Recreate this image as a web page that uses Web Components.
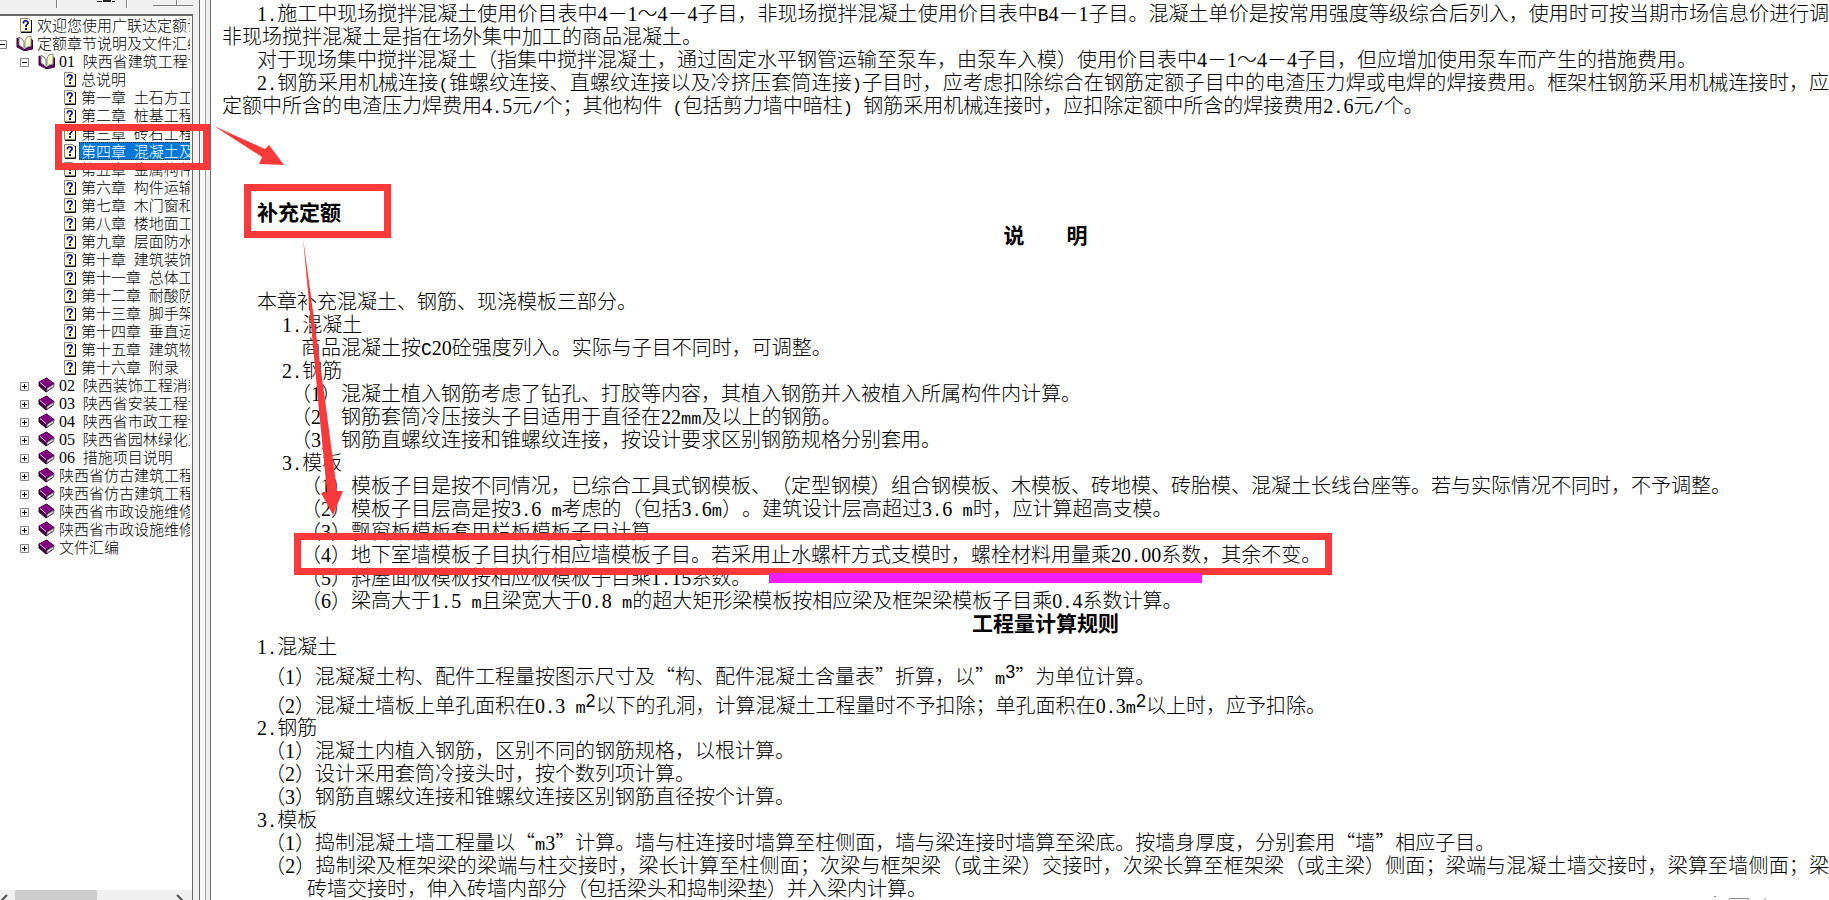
<!DOCTYPE html>
<html lang="zh-CN">

<head>
    <meta charset="UTF-8">
    <title>定额章节说明</title>
    <style>
      body {
        margin: 0;
        overflow: hidden;
        background: #fff;
        color: #000;
        font-family: "Noto Sans CJK SC", sans-serif;
        font-weight: 300;
        text-spacing-trim: space-all;
      }
    </style>
</head>

<body>

<help-window>
    <tool-strip slot="nav"></tool-strip>
    <tree-pane slot="nav">
        <tree-row level="0" icon="page">欢迎您使用广联达定额说明</tree-row>
        <tree-row level="0" icon="open" toggle="minus">定额章节说明及文件汇编</tree-row>
        <tree-row level="1" icon="open" toggle="minus">01 陕西省建筑工程说明</tree-row>
        <tree-row level="2" icon="page">总说明</tree-row>
        <tree-row level="2" icon="page">第一章 土石方工程</tree-row>
        <tree-row level="2" icon="page">第二章 桩基工程</tree-row>
        <tree-row level="2" icon="page">第三章 砖石工程</tree-row>
        <tree-row level="2" icon="page" selected>第四章 混凝土及钢筋</tree-row>
        <tree-row level="2" icon="page">第五章 金属构件</tree-row>
        <tree-row level="2" icon="page">第六章 构件运输</tree-row>
        <tree-row level="2" icon="page">第七章 木门窗和</tree-row>
        <tree-row level="2" icon="page">第八章 楼地面工程</tree-row>
        <tree-row level="2" icon="page">第九章 层面防水</tree-row>
        <tree-row level="2" icon="page">第十章 建筑装饰</tree-row>
        <tree-row level="2" icon="page">第十一章 总体工程</tree-row>
        <tree-row level="2" icon="page">第十二章 耐酸防腐</tree-row>
        <tree-row level="2" icon="page">第十三章 脚手架</tree-row>
        <tree-row level="2" icon="page">第十四章 垂直运输</tree-row>
        <tree-row level="2" icon="page">第十五章 建筑物</tree-row>
        <tree-row level="2" icon="page">第十六章 附录</tree-row>
        <tree-row level="1" icon="book" toggle="plus">02 陕西装饰工程消耗</tree-row>
        <tree-row level="1" icon="book" toggle="plus">03 陕西省安装工程说明</tree-row>
        <tree-row level="1" icon="book" toggle="plus">04 陕西省市政工程说明</tree-row>
        <tree-row level="1" icon="book" toggle="plus">05 陕西省园林绿化工程</tree-row>
        <tree-row level="1" icon="book" toggle="plus">06 措施项目说明</tree-row>
        <tree-row level="1" icon="book" toggle="plus">陕西省仿古建筑工程</tree-row>
        <tree-row level="1" icon="book" toggle="plus">陕西省仿古建筑工程</tree-row>
        <tree-row level="1" icon="book" toggle="plus">陕西省市政设施维修</tree-row>
        <tree-row level="1" icon="book" toggle="plus">陕西省市政设施维修</tree-row>
        <tree-row level="1" icon="book" toggle="plus">文件汇编</tree-row>
    </tree-pane>
    <scroll-strip slot="nav"></scroll-strip>

    <doc-section>
        <doc-line step="1" justify>1.施工中现场搅拌混凝土使用价目表中4－1～4－4子目，非现场搅拌混凝土使用价目表中B4－1子目。混凝土单价是按常用强度等级综合后列入，使用时可按当期市场信息价进行调</doc-line>
        <doc-line>非现场搅拌混凝土是指在场外集中加工的商品混凝土。</doc-line>
        <doc-line step="1">对于现场集中搅拌混凝土（指集中搅拌混凝土，通过固定水平钢管运输至泵车，由泵车入模）使用价目表中4－1～4－4子目，但应增加使用泵车而产生的措施费用。</doc-line>
        <doc-line step="1" justify>2.钢筋采用机械连接(锥螺纹连接、直螺纹连接以及冷挤压套筒连接)子目时，应考虑扣除综合在钢筋定额子目中的电渣压力焊或电焊的焊接费用。框架柱钢筋采用机械连接时，应</doc-line>
        <doc-line>定额中所含的电渣压力焊费用4.5元/个；其他构件 (包括剪力墙中暗柱) 钢筋采用机械连接时，应扣除定额中所含的焊接费用2.6元/个。</doc-line>
    </doc-section>
    <doc-section class="heads">
        <doc-line step="1" bold>补充定额</doc-line>
        <doc-line center bold>说　　明</doc-line>
    </doc-section>
    <doc-section class="notes">
        <doc-line step="1">本章补充混凝土、钢筋、现浇模板三部分。</doc-line>
        <doc-line step="3">1.混凝土</doc-line>
        <doc-line step="5">商品混凝土按C20砼强度列入。实际与子目不同时，可调整。</doc-line>
        <doc-line step="3">2.钢筋</doc-line>
        <doc-line step="4">（1）混凝土植入钢筋考虑了钻孔、打胶等内容，其植入钢筋并入被植入所属构件内计算。</doc-line>
        <doc-line step="4">（2）钢筋套筒冷压接头子目适用于直径在22mm及以上的钢筋。</doc-line>
        <doc-line step="4">（3）钢筋直螺纹连接和锥螺纹连接，按设计要求区别钢筋规格分别套用。</doc-line>
        <doc-line step="3">3.模板</doc-line>
        <doc-line step="5">（1）模板子目是按不同情况，已综合工具式钢模板、（定型钢模）组合钢模板、木模板、砖地模、砖胎模、混凝土长线台座等。若与实际情况不同时，不予调整。</doc-line>
        <doc-line step="5">（2）模板子目层高是按3.6 m考虑的（包括3.6m）。建筑设计层高超过3.6 m时，应计算超高支模。</doc-line>
        <doc-line step="5">（3）飘窗板模板套用栏板模板子目计算</doc-line>
        <doc-line step="5">（4）地下室墙模板子目执行相应墙模板子目。若采用止水螺杆方式支模时，螺栓材料用量乘20.00系数，其余不变。</doc-line>
        <doc-line step="5">（5）斜屋面板模板按相应板模板子目乘1.15系数。</doc-line>
        <doc-line step="5">（6）梁高大于1.5 m且梁宽大于0.8 m的超大矩形梁模板按相应梁及框架梁模板子目乘0.4系数计算。</doc-line>
        <doc-line center bold>工程量计算规则</doc-line>
        <doc-line step="1">1.混凝土</doc-line>
        <doc-line step="2" tall>（1）混凝凝土构、配件工程量按图示尺寸及“构、配件混凝土含量表”折算，以”m<sup>3</sup>”为单位计算。</doc-line>
        <doc-line step="2" tall>（2）混凝土墙板上单孔面积在0.3 m<sup>2</sup>以下的孔洞，计算混凝土工程量时不予扣除；单孔面积在0.3m<sup>2</sup>以上时，应予扣除。</doc-line>
        <doc-line step="1">2.钢筋</doc-line>
        <doc-line step="2">（1）混凝土内植入钢筋，区别不同的钢筋规格，以根计算。</doc-line>
        <doc-line step="2">（2）设计采用套筒冷接头时，按个数列项计算。</doc-line>
        <doc-line step="2">（3）钢筋直螺纹连接和锥螺纹连接区别钢筋直径按个计算。</doc-line>
        <doc-line step="1">3.模板</doc-line>
        <doc-line step="2">（1）捣制混凝土墙工程量以“m3”计算。墙与柱连接时墙算至柱侧面，墙与梁连接时墙算至梁底。按墙身厚度，分别套用“墙”相应子目。</doc-line>
        <doc-line step="2" justify>（2）捣制梁及框架梁的梁端与柱交接时，梁长计算至柱侧面；次梁与框架梁（或主梁）交接时，次梁长算至框架梁（或主梁）侧面；梁端与混凝土墙交接时，梁算至墙侧面；梁</doc-line>
        <doc-line step="6">砖墙交接时，伸入砖墙内部分（包括梁头和捣制梁垫）并入梁内计算。</doc-line>
    </doc-section>
</help-window>
<mark-layer></mark-layer>

<script>
// Half-width characters take half a cell: digits in a serif face, the rest monospaced.
function splitHalfWidth(host) {
  for (const node of [...host.childNodes]) {
    if (node.nodeType !== Node.TEXT_NODE) continue;
    const parts = node.textContent.match(/[0-9]+|[A-Za-z.\/() ]+|[^0-9A-Za-z.\/() ]+/g) || [];
    node.replaceWith(...parts.map(part => {
      if (!/^[0-9A-Za-z.\/() ]/.test(part)) return document.createTextNode(part);
      const span = document.createElement("span");
      span.className = /^[0-9]/.test(part) ? "digit" : /^[A-Z]/.test(part) ? "capital" : "latin";
      span.textContent = part;
      return span;
    }));
  }
}

class HelpWindow extends HTMLElement {
  constructor() {
    super();
    this.attachShadow({ mode: "open" }).innerHTML = `
      <style>
        :host {
          display: grid;
          grid-template-columns: 193px 18px minmax(0, 1fr);
          grid-template-rows: minmax(0, 1fr);
          height: 100vh;
          overflow: clip;
        }
        nav {
          display: flex;
          flex-direction: column;
          min-width: 0;
          background: #f0f0f0;
        }
        .splitter {
          display: flex;
          justify-content: flex-end;
          background: #f0f0f0;
          border-right: 1px solid #696969;
        }
        .splitter i {
          box-sizing: border-box;
          width: 7px;
          margin-right: 4px;
          border-left: 1px solid #696969;
          border-right: 1px solid #a0a0a0;
          background: #f8f8f8;
        }
        main {
          box-sizing: border-box;
          overflow: clip;
          padding: 1px 0 0 11px;
        }
      </style>
      <nav><slot name="nav"></slot></nav>
      <div class="splitter"><i></i></div>
      <main><slot></slot></main>
    `;
  }
}

class ToolStrip extends HTMLElement {
  constructor() {
    super();
    this.attachShadow({ mode: "open" }).innerHTML = `
      <style>
        :host { display: block; flex: 0 0 14px; }
        svg { display: block; overflow: visible; }
      </style>
      <svg width="193" height="14" aria-hidden="true" fill="none">
        <path d="M56.5 0V8M126.5 0V8M153 5.5H200.5V0M176.5 0V5" stroke="#808080"/>
        <path d="M57.5 0V8M127.5 0V8M177.5 0V5" stroke="#fff"/>
        <path d="M97 1.5H102M103 .5H111M112 1.5H115M103 1.5H111" stroke="#222"/>
      </svg>
    `;
  }
}

class TreePane extends HTMLElement {
  constructor() {
    super();
    this.attachShadow({ mode: "open" }).innerHTML = `
      <style>
        :host {
          display: block;
          flex: 1;
          min-height: 0;
          padding: 0 2px 0 0;
          background: #fff;
          border-top: 2px solid #696969;
          border-right: 1px solid #696969;
        }
      </style>
      <slot></slot>
    `;
  }
}

const icons = {
  page: `<svg width="17" height="16" viewBox="0 0 17 16">
      <path d="M4.500 1.500H12.500L15.500 4.500V14.500H4.500Z" fill="#ffffd8" stroke="#8a8a8a"/>
      <path d="M15.500 3V15.500H5" fill="none" stroke="#000"/>
      <path d="M7.500 6.500V5L8.500 4H11L12 5V6.500L10 8.500V10" fill="none" stroke="#00008b" stroke-width="1.600"/>
      <path d="M9 11H11V13H9Z" fill="#00008b"/>
    </svg>`,
  open: `<svg width="17" height="16" viewBox="0 0 17 16">
      <path d="M1 3L3 4V11L7 13L9 15L11 13L15 12V4L16.500 5V14L10 15.500H8L1 12Z" fill="#800080" stroke="#300030"/>
      <path d="M3 2L6 4L8 7V14L6 12L3 10Z" fill="#fff" stroke="#777"/>
      <path d="M9 5L11 2L15 1V11L11 12L9 14Z" fill="#ffffc0" stroke="#888"/>
    </svg>`,
  book: `<svg width="17" height="16" viewBox="0 0 17 16">
      <path d="M1 5L8.500 1L16 6.500L15.500 10L8 15L1 9Z" fill="#4b004b" stroke="#200020"/>
      <path d="M1 5L8.500 1L15.500 6L8 10.500Z" fill="#800080"/>
      <path d="M2 5.500L8 10.500" stroke="#f8d8f8"/>
      <path d="M9 11.500L15.500 7.500V9.500L9 14Z" fill="#fff" stroke="#777"/>
    </svg>`,
};

class TreeRow extends HTMLElement {
  constructor() {
    super();
    this.attachShadow({ mode: "open" });
  }

  connectedCallback() {
    splitHalfWidth(this);
    this.render();
  }

  render() {
    const toggle = this.getAttribute("toggle");
    const bar = toggle === "plus" ? "M2 4.500H7M4.500 2V7" : "M2 4.500H7";
    this.shadowRoot.innerHTML = `
      <style>
        :host {
          display: flex;
          align-items: center;
          height: 18px;
          overflow: hidden;
          margin-left: -2px;
          padding-left: calc(${this.getAttribute("level")} * 22px);
          font-size: 15px;
          line-height: 18px;
          white-space: pre;
        }
        button {
          flex: 0 0 9px;
          height: 9px;
          margin: 3px 9px 0 0;
          padding: 0;
          border: 0;
          background: none;
        }
        .blank { flex: 0 0 18px; }
        svg { display: block; flex: none; }
        a {
          flex: 1 0 auto;
          margin-left: 2px;
          padding-left: 2px;
          color: inherit;
          text-decoration: none;
        }
        :host([selected]) a {
          background: #0078d7;
          color: #fff;
          outline: 1px dotted #333;
          outline-offset: -1px;
        }
        ::slotted(.digit) { font: 16px/1 "Liberation Serif", serif; }
        ::slotted(.latin) { font: 13px/1 "Liberation Mono", monospace; }
      </style>
      ${toggle ? `<button aria-label="${toggle === "plus" ? "展开" : "折叠"}"><svg width="9" height="9"><path d="M.5 .5H8.500V8.500H.5Z" fill="#fff" stroke="#848484"/><path d="${bar}" stroke="#000"/></svg></button>` : `<span class="blank"></span>`}
      ${icons[this.getAttribute("icon")]}
      <a href="#"><slot></slot></a>
    `;
  }
}

class ScrollStrip extends HTMLElement {
  constructor() {
    super();
    this.attachShadow({ mode: "open" }).innerHTML = `
      <style>
        :host {
          display: flex;
          flex: 0 0 10px;
          overflow: hidden;
          background: #f0f0f0;
          border-right: 1px solid #696969;
        }
        svg { display: block; flex: none; }
        .track { flex: 1; }
        .thumb { width: 51%; height: 10px; background: #cdcdcd; }
      </style>
      <svg width="15" height="10" fill="none"><path d="M7 5L1 11" stroke="#505050" stroke-width="2"/></svg>
      <div class="track"><div class="thumb"></div></div>
      <svg width="16" height="10" fill="none"><path d="M1 5L7 11" stroke="#505050" stroke-width="2"/></svg>
    `;
  }
}

class DocSection extends HTMLElement {
  constructor() {
    super();
    this.attachShadow({ mode: "open" }).innerHTML = `
      <style>
        :host { display: block; }
        :host(.heads) { margin-top: 84px; }
        :host(.notes) { margin-top: 43px; }
      </style>
      <slot></slot>
    `;
  }
}

// Indents of the outline, by step.
const indents = [0, 35, 43, 60, 69, 79, 85];

class DocLine extends HTMLElement {
  constructor() {
    super();
    this.attachShadow({ mode: "open" });
  }

  connectedCallback() {
    splitHalfWidth(this);
    this.shadowRoot.innerHTML = `
      <style>
        :host {
          display: block;
          height: 23px;
          padding-left: ${indents[this.getAttribute("step") || 0]}px;
          font-size: 20px;
          line-height: 23px;
          white-space: nowrap;
        }
        :host([tall]) { padding-top: 6px; }
        :host([bold]) { font-size: 21px; font-weight: 700; }
        :host([center]) { padding-left: 40px; text-align: center; }
        :host([justify]) { text-align: justify; text-align-last: justify; }
        ::slotted(.digit) { font: 20px/1 "Liberation Serif", serif; }
        ::slotted(.latin) { font: 17px/1 "Liberation Mono", monospace; }
        ::slotted(.capital) { font: 18px/1 "Liberation Mono", monospace; }
        ::slotted(sup) { font: 18px/1 "Liberation Sans", sans-serif; vertical-align: 6px; }
      </style>
      <slot></slot>
    `;
  }
}

// Red frames, arrows and the underline drawn over the window.
class MarkLayer extends HTMLElement {
  constructor() {
    super();
    this.attachShadow({ mode: "open" }).innerHTML = `
      <style>
        :host { position: absolute; inset: 0; overflow: hidden; pointer-events: none; }
        svg { display: block; width: 100%; height: 100%; }
      </style>
      <svg aria-hidden="true">
        <g fill="none" stroke="#fa3a3a" stroke-width="7">
          <rect x="58.500" y="127.500" width="148" height="39"/>
          <rect x="247.500" y="187.500" width="140" height="47"/>
          <rect x="297.500" y="536.500" width="1031" height="35"/>
        </g>
        <g fill="#fa3a3a">
          <path d="M214 126L265 149L269 145L284 165L259 164L262 157Z"/>
          <path d="M303 238L325 400L337 491L343 491L333 515L321 493L327 492L318 400Z"/>
        </g>
        <rect x="769" y="573" width="433" height="10" fill="#f51df5"/>
        <path d="M1729.500 900V898.500H1748.500V900M1714 896.500H1716M1764 899H1766" fill="none" stroke="#888"/>
      </svg>
    `;
  }
}

customElements.define("help-window", HelpWindow);
customElements.define("tool-strip", ToolStrip);
customElements.define("tree-pane", TreePane);
customElements.define("tree-row", TreeRow);
customElements.define("scroll-strip", ScrollStrip);
customElements.define("doc-section", DocSection);
customElements.define("doc-line", DocLine);
customElements.define("mark-layer", MarkLayer);
</script>

</body>

</html>
